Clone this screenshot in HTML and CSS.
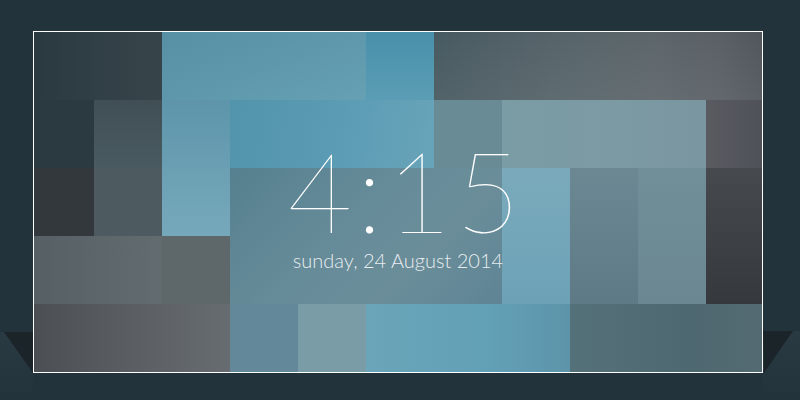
FILE: index.html
```html
<!DOCTYPE html>
<html>
<head>
<meta charset="utf-8">
<link rel="stylesheet" href="styles.css">
</head>
<body>
<svg class="ledge" width="800" height="400" viewBox="0 0 800 400" aria-hidden="true">
  <defs>
    <linearGradient id="lg" x1="0" y1="0" x2="0" y2="1">
      <stop offset="0" stop-color="#2a3a43"/>
      <stop offset="1" stop-color="#23333c"/>
    </linearGradient>
  </defs>
  <polygon points="0,332 33,332 33,400 0,400" fill="url(#lg)"/>
  <polygon points="4,332 33,332 33,373" fill="#1b2529"/>
  <polygon points="763,331 800,331 800,400 763,400" fill="url(#lg)"/>
  <polygon points="763,331 793,331 764,373" fill="#1b2529"/>
</svg>
<div class="frame">
  <div class="tiles">
    <div class="t b1"></div><div class="t b2"></div><div class="t b3"></div><div class="t b4"></div>
    <div class="t b5"></div><div class="t b6"></div><div class="t b7"></div><div class="t b8"></div>
    <div class="t b9"></div><div class="t b10"></div><div class="t b11"></div><div class="t b12"></div>
    <div class="t b13"></div><div class="t b14"></div><div class="t b15"></div><div class="t b16"></div>
    <div class="t b17"></div><div class="t b18"></div><div class="t b19"></div><div class="t b20"></div>
    <div class="t b21"></div><div class="t b22"></div><div class="t b23"></div><div class="t b24"></div>
    <div class="t b25"></div><div class="t b26"></div>
  </div>
  <div class="clock">
    <div class="time">4:15</div>
    <div class="date">sunday, 24 August 2014</div>
  </div>
</div>
</body>
</html>
```
FILE: styles.css
```css
html, body {
  margin: 0;
  padding: 0;
}
body {
  width: 800px;
  height: 400px;
  background: #22333c;
  position: relative;
  overflow: hidden;
  padding: 31px 0 0 33px;
  box-sizing: border-box;
  font-family: Lato, "Open Sans", sans-serif;
}
.ledge {
  position: absolute;
  left: 0;
  top: 0;
}
.frame {
  position: relative;
  width: 728px;
  height: 340px;
  border: 1px solid #ffffff;
  overflow: hidden;
}
.tiles {
  display: grid;
  grid-template-columns: repeat(11, 68px);
  grid-template-rows: repeat(5, 68px);
  width: 748px;
  margin-left: -8px;
}
.b1 { grid-area: 1 / 1 / 2 / 3; background: linear-gradient(90deg, #2a3840, #37454b); }
.b2 { grid-area: 1 / 3 / 2 / 6; background: linear-gradient(160deg, #578fa4, #66a0b3); }
.b3 { grid-area: 1 / 6 / 2 / 7; background: linear-gradient(180deg, #4a90aa, #5a9db5); }
.b4 { grid-area: 1 / 7 / 2 / 12; background: linear-gradient(180deg, rgba(255,255,255,0), rgba(255,255,255,0.05)), linear-gradient(90deg, #485a61 0%, #56646a 35%, #5d666a 65%, #5a5f65 85%, #4f545b 100%); }
.b5 { grid-area: 2 / 1 / 3 / 2; background: #2b3a40; }
.b6 { grid-area: 2 / 2 / 3 / 3; background: linear-gradient(180deg, #3f4f55, #495a60); }
.b7 { grid-area: 2 / 3 / 3 / 4; background: linear-gradient(180deg, #5e95aa, #6a9fb3); }
.b8 { grid-area: 2 / 4 / 3 / 7; background: linear-gradient(100deg, #5194ac, #5d9db5 60%, #68a4b9); }
.b9 { grid-area: 2 / 7 / 3 / 8; background: #688b96; }
.b10 { grid-area: 2 / 8 / 3 / 11; background: linear-gradient(90deg, #7a9ca4, #7c9aa4 60%, #7a96a0); }
.b11 { grid-area: 2 / 11 / 3 / 12; background: linear-gradient(90deg, #595b61, #4c5056); }
.b12 { grid-area: 3 / 1 / 4 / 2; background: #32383b; }
.b13 { grid-area: 3 / 2 / 4 / 3; background: #4d5b61; }
.b14 { grid-area: 3 / 3 / 4 / 4; background: linear-gradient(180deg, #6ba0b3, #75a8ba); }
.b15 { grid-area: 3 / 4 / 5 / 8; background: linear-gradient(135deg, #56808f 0%, #678c99 45%, #6a8d99 70%, #5e8495 100%); }
.b16 { grid-area: 3 / 8 / 5 / 9; background: linear-gradient(180deg, #7aaabc, #6da2b6); }
.b17 { grid-area: 3 / 9 / 5 / 10; background: linear-gradient(180deg, #6c8893, #5e7a86); }
.b18 { grid-area: 3 / 10 / 5 / 11; background: linear-gradient(180deg, #718f99, #6b8892); }
.b19 { grid-area: 3 / 11 / 5 / 12; background: linear-gradient(180deg, #46494d, #35393d); }
.b20 { grid-area: 4 / 1 / 5 / 3; background: linear-gradient(90deg, #566064, #626b6f); }
.b21 { grid-area: 4 / 3 / 5 / 4; background: #5e676a; }
.b22 { grid-area: 5 / 1 / 6 / 4; background: linear-gradient(90deg, #4a4e52, #575b5f 40%, #676c70); }
.b23 { grid-area: 5 / 4 / 6 / 5; background: #63889a; }
.b24 { grid-area: 5 / 5 / 6 / 6; background: #7a9ca7; }
.b25 { grid-area: 5 / 6 / 6 / 9; background: linear-gradient(90deg, #6aa5b9, #62a0b6 60%, #5d94aa); }
.b26 { grid-area: 5 / 9 / 6 / 12; background: linear-gradient(90deg, #547079, #4e6871 60%, #546a71); }

.clock {
  position: absolute;
  left: 0;
  top: 0;
  right: 0;
  display: flex;
  flex-direction: column;
  align-items: center;
  padding-top: 108px;
  color: #ffffff;
}
.time {
  font-size: 112px;
  line-height: 100px;
  font-weight: 100;
  letter-spacing: 4px;
  padding-left: 16px;
}
.date {
  margin-top: 10px;
  font-size: 20px;
  line-height: 20px;
  font-weight: 300;
  color: rgba(255, 255, 255, 0.86);
}
```
